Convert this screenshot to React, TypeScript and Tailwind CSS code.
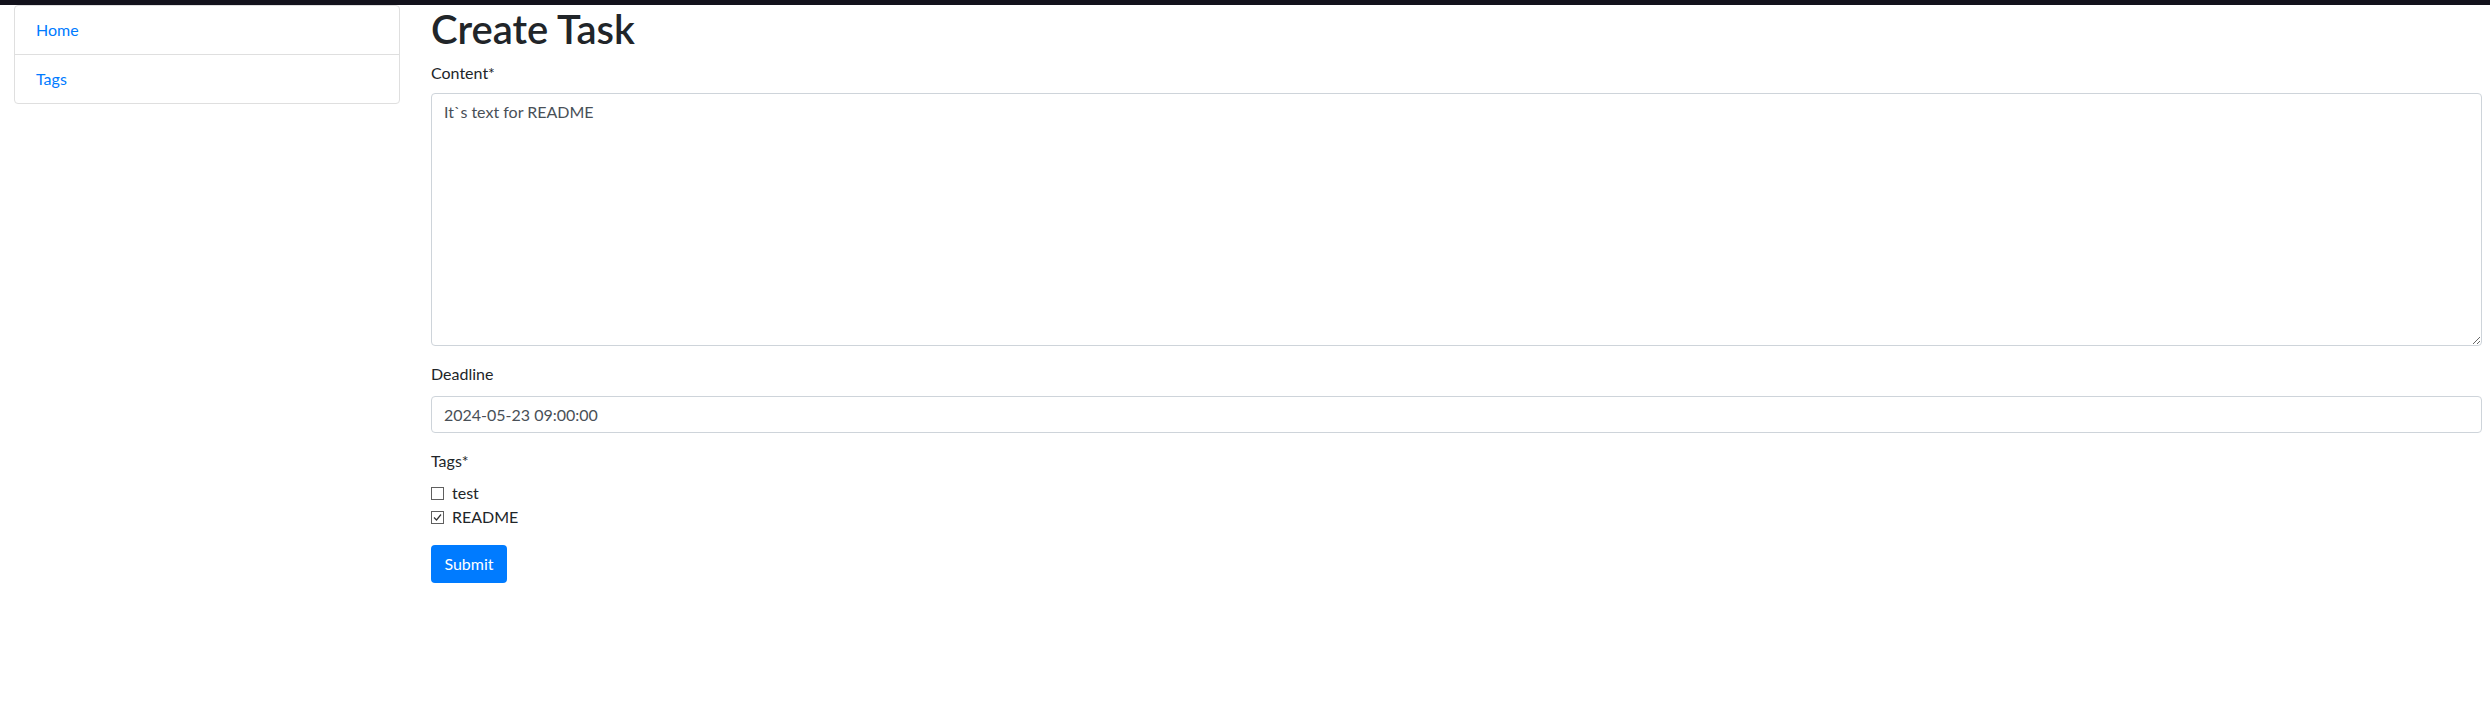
// Create Task - formulaire de création de tâche

const font = { fontFamily: 'Lato, "Liberation Sans", sans-serif' }

function Sidebar() {
  return (
    <div className="ml-[14px] w-[386px] shrink-0">
      <div className="flex flex-col rounded-[4px] border border-[#dfdfdf] bg-white">
        <a href="#" className="block px-[21px] py-3 text-[16px] leading-6 text-[#007bff] border-b border-[#dfdfdf]">
          Home
        </a>
        <a href="#" className="block px-[21px] py-3 text-[16px] leading-6 text-[#007bff]">
          Tags
        </a>
      </div>
    </div>
  )
}

function Checkbox({ checked, label }: { checked: boolean; label: string }) {
  return (
    <label className="flex items-center h-6 text-[16px] leading-6 text-[#212529]">
      <span className="w-[13px] h-[13px] border border-[#5f5f5f] bg-white flex items-center justify-center mr-2">
        {checked && (
          <svg width="9" height="9" viewBox="0 0 9 9" fill="none">
            <path d="M1 4.5 L3.5 7 L8 1.5" stroke="#333" strokeWidth="1.2" />
          </svg>
        )}
      </span>
      {label}
    </label>
  )
}

export default function App() {
  return (
    <div className="min-h-[705px] bg-white" style={font}>
      <div className="h-[5px] bg-[#13121c]" />
      <div className="flex">
        <Sidebar />

        <div className="ml-[31px] w-[2051px]">
          <h1 className="text-[40px] font-semibold leading-[48px] text-[#212529] mb-2">Create Task</h1>

          {/* Contenu */}
          <div className="mb-4">
            <div className="text-[16px] leading-6 text-[#212529] mb-2">Content*</div>
            <textarea
              defaultValue="It`s text for README"
              className="block w-full h-[253px] rounded-[4px] border border-[#ced4da] px-3 py-1.5 text-[16px] leading-6 text-[#495057] outline-none"
              style={font}
            />
          </div>

          {/* Deadline */}
          <div className="mb-4">
            <div className="text-[16px] leading-6 text-[#212529] mb-[10px]">Deadline</div>
            <input
              type="text"
              defaultValue="2024-05-23 09:00:00"
              className="block w-full h-[37px] rounded-[4px] border border-[#ced4da] px-3 text-[16px] text-[#495057] outline-none"
              style={font}
            />
          </div>

          {/* Tags */}
          <div className="mb-4">
            <div className="text-[16px] leading-6 text-[#212529] mb-2">Tags*</div>
            <Checkbox checked={false} label="test" />
            <Checkbox checked={true} label="README" />
          </div>

          <button
            className="h-[38px] w-[76px] rounded-[4px] bg-[#007bff] text-white text-[16px] leading-6"
            style={font}
          >
            Submit
          </button>
        </div>
      </div>
    </div>
  )
}
